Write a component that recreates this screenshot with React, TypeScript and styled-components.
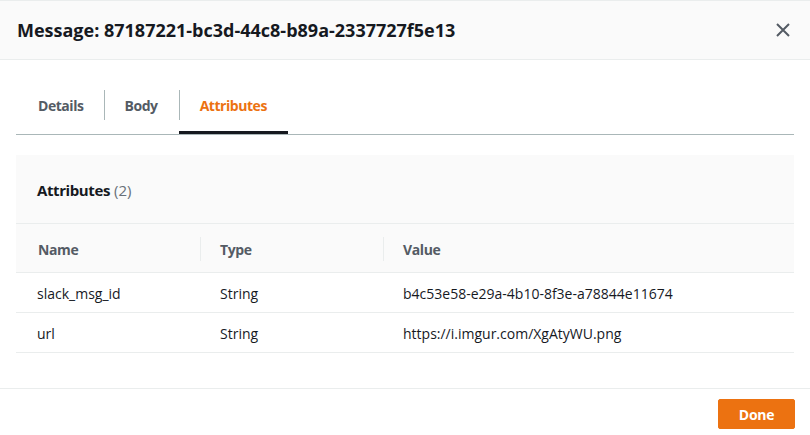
import React from "react";
import styled, { createGlobalStyle } from "styled-components";

const Global = createGlobalStyle`
  html, body { margin: 0; padding: 0; background: #fff; }
  body { font-family: "Open Sans", "Noto Sans", Arial, sans-serif; color: #16191f; -webkit-font-smoothing: antialiased; }
  * { box-sizing: border-box; }
`;

const Modal = styled.div`
  width: 810px;
  height: 435px;
  display: flex;
  flex-direction: column;
  background: #fff;
  border-top: 1px solid #eaeded;
`;

const Header = styled.div`
  height: 59px;
  flex: none;
  display: flex;
  align-items: center;
  justify-content: space-between;
  padding: 0 16px 0 17px;
  background: #fafafa;
  border-bottom: 1px solid #eaeded;
`;

const Title = styled.h2`
  margin: 0;
  font-size: 18px;
  font-weight: 700;
  color: #16191f;
  letter-spacing: 0;
`;

const CloseButton = styled.button`
  border: 0;
  background: none;
  padding: 4px;
  display: flex;
  cursor: pointer;
  color: #545b64;
`;

const Body = styled.div`
  flex: 1;
  padding: 16px 16px 0;
`;

const TabList = styled.div`
  display: flex;
  border-bottom: 1px solid #aab7b8;
  padding-left: 2px;
`;

const Tab = styled.div<{ $active?: boolean; $divider?: boolean }>`
  position: relative;
  height: 58px;
  display: flex;
  align-items: center;
  padding: 3px 21px 0 21px;
  font-size: 14px;
  font-weight: 700;
  letter-spacing: -0.45px;
  color: ${(p) => (p.$active ? "#ec7211" : "#545b64")};
  border-bottom: 3px solid ${(p) => (p.$active ? "#16191f" : "transparent")};
  &:first-child {
    padding-left: 20px;
    padding-right: 20px;
  }
  &::before {
    content: "";
    display: ${(p) => (p.$divider ? "block" : "none")};
    position: absolute;
    left: 0;
    top: 14px;
    height: 30px;
    width: 1px;
    background: #aab7b8;
  }
`;

const Container = styled.div`
  margin-top: 20px;
  background: #fafafa;
`;

const ContainerHeader = styled.div`
  height: 69px;
  display: flex;
  align-items: center;
  padding: 2px 0 0 21px;
  border-bottom: 1px solid #eaeded;
  font-size: 15px;
  font-weight: 700;
  letter-spacing: -0.4px;
  color: #16191f;
`;

const Count = styled.span`
  font-weight: 400;
  color: #687078;
  margin-left: 4px;
  letter-spacing: 0;
`;

const Table = styled.div`
  display: grid;
  grid-template-columns: 184px 183px 1fr;
`;

const HeadCell = styled.div<{ $divider?: boolean }>`
  position: relative;
  height: 49px;
  display: flex;
  align-items: center;
  padding: 2px 0 0 ${(p) => (p.$divider ? "20px" : "22px")};
  font-size: 14px;
  font-weight: 700;
  letter-spacing: -0.4px;
  color: #545b64;
  background: #fafafa;
  border-bottom: 1px solid #eaeded;
  &::before {
    content: "";
    display: ${(p) => (p.$divider ? "block" : "none")};
    position: absolute;
    left: 0;
    top: 13px;
    height: 24px;
    width: 1px;
    background: #eaeded;
  }
`;

const Cell = styled.div<{ $first?: boolean }>`
  height: 40px;
  display: flex;
  align-items: center;
  padding: 2px 0 0 ${(p) => (p.$first ? "21px" : "20px")};
  font-size: 14px;
  color: #16191f;
  background: #fff;
  border-bottom: 1px solid #eaeded;
`;

const Footer = styled.div`
  height: 47px;
  flex: none;
  border-top: 1px solid #eaeded;
  display: flex;
  justify-content: flex-end;
  align-items: flex-start;
  padding: 10px 15px 0 0;
`;

const PrimaryButton = styled.button`
  width: 77px;
  height: 30px;
  border: 1px solid #ec7211;
  border-radius: 2px;
  background: #ec7211;
  color: #fff;
  font-family: inherit;
  font-size: 14px;
  font-weight: 700;
  letter-spacing: -0.3px;
  cursor: pointer;
`;

const rows = [
  { name: "slack_msg_id", type: "String", value: "b4c53e58-e29a-4b10-8f3e-a78844e11674" },
  { name: "url", type: "String", value: "https://i.imgur.com/XgAtyWU.png" },
];

export default function App() {
  return (
    <>
      <Global />
      <Modal>
        <Header>
          <Title>Message: 87187221-bc3d-44c8-b89a-2337727f5e13</Title>
          <CloseButton aria-label="Close">
            <svg width="14" height="14" viewBox="0 0 14 14">
              <path d="M1 1 L13 13 M13 1 L1 13" stroke="currentColor" strokeWidth="2" fill="none" />
            </svg>
          </CloseButton>
        </Header>
        <Body>
          <TabList>
            <Tab>Details</Tab>
            <Tab $divider>Body</Tab>
            <Tab $divider $active>Attributes</Tab>
          </TabList>
          <Container>
            <ContainerHeader>
              Attributes<Count>(2)</Count>
            </ContainerHeader>
            <Table>
              <HeadCell>Name</HeadCell>
              <HeadCell $divider>Type</HeadCell>
              <HeadCell $divider>Value</HeadCell>
              {rows.map((r) => (
                <React.Fragment key={r.name}>
                  <Cell $first>{r.name}</Cell>
                  <Cell>{r.type}</Cell>
                  <Cell>{r.value}</Cell>
                </React.Fragment>
              ))}
            </Table>
          </Container>
        </Body>
        <Footer>
          <PrimaryButton>Done</PrimaryButton>
        </Footer>
      </Modal>
    </>
  );
}
